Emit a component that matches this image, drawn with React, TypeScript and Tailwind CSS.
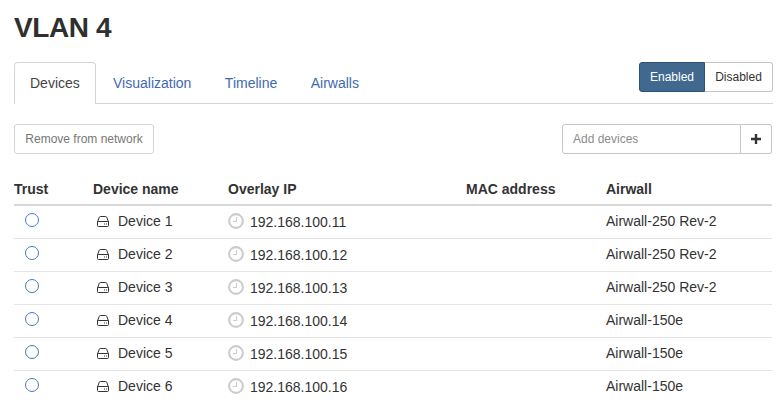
import React from 'react';

const tabs = ['Visualization', 'Timeline', 'Airwalls'];

const devices = [
  { name: 'Device 1', ip: '192.168.100.11', airwall: 'Airwall-250 Rev-2' },
  { name: 'Device 2', ip: '192.168.100.12', airwall: 'Airwall-250 Rev-2' },
  { name: 'Device 3', ip: '192.168.100.13', airwall: 'Airwall-250 Rev-2' },
  { name: 'Device 4', ip: '192.168.100.14', airwall: 'Airwall-150e' },
  { name: 'Device 5', ip: '192.168.100.15', airwall: 'Airwall-150e' },
  { name: 'Device 6', ip: '192.168.100.16', airwall: 'Airwall-150e' },
];

const columns = 'grid grid-cols-[79px_135px_238px_140px_1fr]';

function DriveIcon() {
  return (
    <svg width="12" height="11" viewBox="0 0 12 11" fill="none" stroke="#333" strokeWidth="1" strokeLinejoin="round">
      <path d="M.5 6 2.3 1.2Q2.6.5 3.3.5h5.4q.7 0 1 .7L11.500 6v3.500q0 1-1 1h-9q-1 0-1-1V6q0-.5.7-.5h9.600q.7 0 .7.5" />
      <path d="M7 8h1M9 8h1" />
    </svg>
  );
}

function ClockIcon() {
  return (
    <svg width="16" height="16" viewBox="0 0 16 16" fill="none" stroke="#ccc">
      <circle cx="8" cy="8" r="6.900" strokeWidth="2.100" />
      <path d="M8.500 4v4.500H5" strokeWidth="1.100" />
    </svg>
  );
}

export default function App() {
  return (
    <div className="h-[405px] w-[783px] overflow-hidden bg-white pl-3.5 pr-[11px] pt-3 font-['Liberation_Sans',Arial,sans-serif] text-sm text-[#333]">
      <h1 className="h-[50px] text-[28px] font-bold leading-8 tracking-[-0.4px] text-[#2f2f2f]">VLAN 4</h1>

      <div className="flex h-[42px] w-[759px] items-start border-b border-[#d5d5d5]">
        <div className="h-[42px] w-[82px] shrink-0 rounded-t border border-b-0 border-[#d5d5d5] bg-white pl-[15px] leading-[41px] text-[#444]">
          Devices
        </div>
        <nav className="ml-[17px] flex gap-[33.500px] leading-[43px] text-[#3f69b0]">
          {tabs.map((tab) => (
            <a key={tab}>{tab}</a>
          ))}
        </nav>
        <div className="ml-auto flex h-[30px] text-xs leading-7">
          <button className="w-[66px] rounded-l-[3px] border border-[#2b5177] bg-[#41698f] text-white">Enabled</button>
          <button className="w-[68px] rounded-r-[3px] border border-l-0 border-[#c4c4c4] bg-white">Disabled</button>
        </div>
      </div>

      <div className="mt-5 flex h-[30px] justify-between text-xs">
        <button className="w-[140px] rounded-[3px] border border-[#d5d5d5] text-[#777]">Remove from network</button>
        <div className="flex w-[210px]">
          <input
            className="h-[30px] w-[179px] rounded-l-[3px] border border-[#c6c6c6] px-2.5 text-xs placeholder:text-[#8c8c8c]"
            placeholder="Add devices"
          />
          <button className="flex w-[31px] items-center justify-center rounded-r-[3px] border border-l-0 border-[#c6c6c6]">
            <svg width="10" height="10" viewBox="0 0 10 10" stroke="#333" strokeWidth="2.400">
              <path d="M5 0v10M0 5h10" />
            </svg>
          </button>
        </div>
      </div>

      <div className="w-[758px]">
        <div className={`${columns} h-[52px] border-b-2 border-[#d8d8d8] pt-[25px] font-bold leading-5`}>
          <span>Trust</span>
          <span>Device name</span>
          <span>Overlay IP</span>
          <span>MAC address</span>
          <span>Airwall</span>
        </div>
        {devices.map((device) => (
          <div key={device.name} className={`${columns} h-[33px] border-b border-[#e5e5e5] leading-[31px] last:border-b-0`}>
            <span className="pl-[11px] pt-[7px]">
              <span className="block size-3.5 rounded-full border border-[#4a78c8]" />
            </span>
            <span className="flex">
              <span className="w-[25px] pl-1 pt-[10px]">
                <DriveIcon />
              </span>
              {device.name}
            </span>
            <span className="flex leading-[33px]">
              <span className="w-[22px] pt-[7px]">
                <ClockIcon />
              </span>
              {device.ip}
            </span>
            <span />
            <span>{device.airwall}</span>
          </div>
        ))}
      </div>
    </div>
  );
}
